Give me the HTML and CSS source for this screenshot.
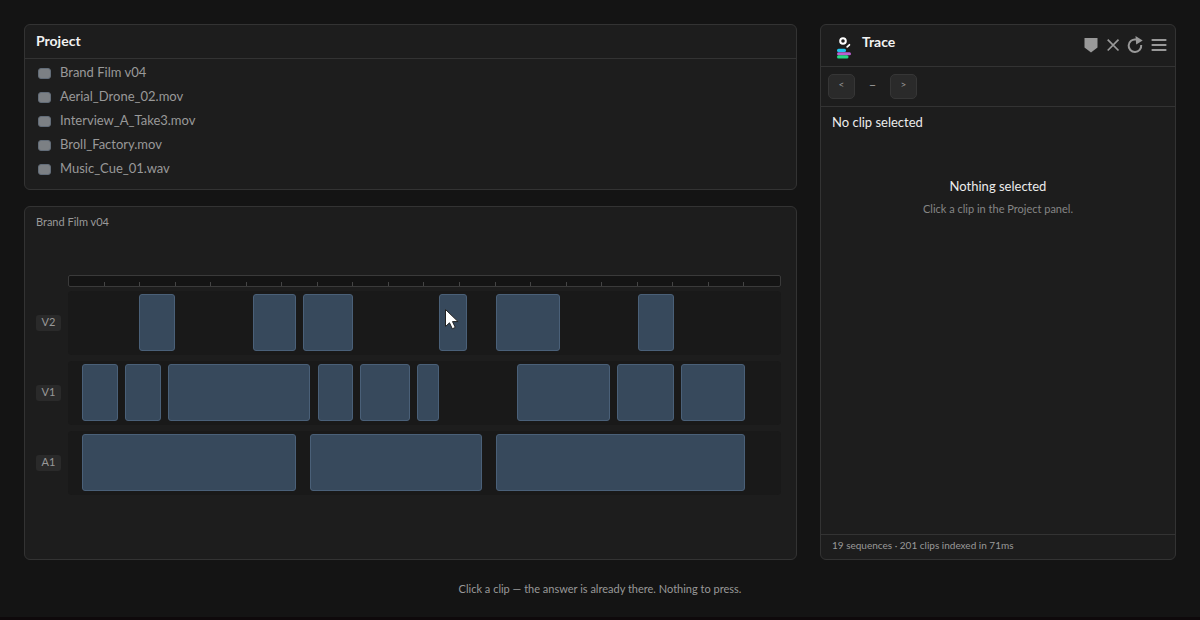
FILE: index.html
```html
<!DOCTYPE html>
<html lang="en">
<head>
    <meta charset="UTF-8">
    <meta name="viewport" content="width=device-width, initial-scale=1.0">
    <title>Trace</title>
    <link rel="stylesheet" href="styles.css">
</head>
<body>
    <main class="workspace">
        <div class="left">
            <section class="panel project">
                <h2 class="panel-title">Project</h2>
                <ul class="files">
                    <li><button class="file"><span class="thumb"></span>Brand Film v04</button></li>
                    <li><button class="file"><span class="thumb"></span>Aerial_Drone_02.mov</button></li>
                    <li><button class="file"><span class="thumb"></span>Interview_A_Take3.mov</button></li>
                    <li><button class="file"><span class="thumb"></span>Broll_Factory.mov</button></li>
                    <li><button class="file"><span class="thumb"></span>Music_Cue_01.wav</button></li>
                </ul>
            </section>

            <section class="panel timeline">
                <h2 class="seq-name">Brand Film v04</h2>
                <div class="tracks">
                    <div class="ruler">
                        <i></i><i></i><i></i><i></i><i></i><i></i><i></i><i></i><i></i><i></i>
                        <i></i><i></i><i></i><i></i><i></i><i></i><i></i><i></i><i></i><i></i>
                    </div>

                    <!-- every lane is 100 columns wide, one per percent of the sequence -->
                    <span class="track-name">V2</span>
                    <div class="lane">
                        <button class="clip" aria-label="V2 clip 1" style="grid-column: 11 / span 5"></button>
                        <button class="clip" aria-label="V2 clip 2" style="grid-column: 27 / span 6"></button>
                        <button class="clip" aria-label="V2 clip 3" style="grid-column: 34 / span 7"></button>
                        <button class="clip" aria-label="V2 clip 4" style="grid-column: 53 / span 4">
                            <svg class="cursor" width="16" height="22" viewBox="0 0 16 22">
                                <path d="M1.5 1.5v17l4-3.7 2.8 6 3-1.4-2.8-5.8h5.6z" fill="#fff" stroke="#222" stroke-width="1"/>
                            </svg>
                        </button>
                        <button class="clip" aria-label="V2 clip 5" style="grid-column: 61 / span 9"></button>
                        <button class="clip" aria-label="V2 clip 6" style="grid-column: 81 / span 5"></button>
                    </div>

                    <span class="track-name">V1</span>
                    <div class="lane">
                        <button class="clip" aria-label="V1 clip 1" style="grid-column: 3 / span 5"></button>
                        <button class="clip" aria-label="V1 clip 2" style="grid-column: 9 / span 5"></button>
                        <button class="clip" aria-label="V1 clip 3" style="grid-column: 15 / span 20"></button>
                        <button class="clip" aria-label="V1 clip 4" style="grid-column: 36 / span 5"></button>
                        <button class="clip" aria-label="V1 clip 5" style="grid-column: 42 / span 7"></button>
                        <button class="clip" aria-label="V1 clip 6" style="grid-column: 50 / span 3"></button>
                        <button class="clip" aria-label="V1 clip 7" style="grid-column: 64 / span 13"></button>
                        <button class="clip" aria-label="V1 clip 8" style="grid-column: 78 / span 8"></button>
                        <button class="clip" aria-label="V1 clip 9" style="grid-column: 87 / span 9"></button>
                    </div>

                    <span class="track-name">A1</span>
                    <div class="lane">
                        <button class="clip" aria-label="A1 clip 1" style="grid-column: 3 / span 30"></button>
                        <button class="clip" aria-label="A1 clip 2" style="grid-column: 35 / span 24"></button>
                        <button class="clip" aria-label="A1 clip 3" style="grid-column: 61 / span 35"></button>
                    </div>
                </div>
            </section>
        </div>

        <aside class="panel trace">
            <header class="trace-head">
                <svg class="logo" width="18" height="24" viewBox="0 0 18 24">
                    <circle cx="8" cy="6" r="2.8" fill="none" stroke="#fff" stroke-width="2"/>
                    <path d="M12.2 11.8l2.2-2" stroke="#fff" stroke-width="1.8" stroke-linecap="round"/>
                    <rect x="2" y="13.8" width="9" height="3.2" rx="1.5" fill="#22c3ee"/>
                    <rect x="2" y="17.2" width="14" height="3" rx="1.5" fill="#b95fd0"/>
                    <rect x="2" y="20.3" width="11.5" height="3.2" rx="1.5" fill="#27d884"/>
                </svg>
                <h2 class="trace-name">Trace</h2>
                <div class="tools">
                    <button class="tool" aria-label="Marker">
                        <svg width="16" height="16" viewBox="0 0 16 16"><path d="M1.5 1h13v9.5L8 15.5 1.5 10.5z" fill="currentColor"/></svg>
                    </button>
                    <button class="tool" aria-label="Clear">
                        <svg width="16" height="16" viewBox="0 0 16 16"><path d="M2.7 2.7l10.8 10.8M13.5 2.7L2.7 13.5" stroke="currentColor" stroke-width="1.7"/></svg>
                    </button>
                    <button class="tool" aria-label="Refresh">
                        <svg width="16" height="18" viewBox="0 0 16 18">
                            <path d="M9 3.5A6.3 6.3 0 1 0 14.2 9" fill="none" stroke="currentColor" stroke-width="2"/>
                            <path d="M8.5 0l7.2 4.6-6.5 4z" fill="currentColor"/>
                        </svg>
                    </button>
                    <button class="tool menu" aria-label="Menu">
                        <svg width="16" height="16" viewBox="0 0 16 16"><path d="M1.4 3h13.2M1.4 8h13.2M1.4 13h13.2" stroke="currentColor" stroke-width="2" stroke-linecap="round"/></svg>
                    </button>
                </div>
            </header>
            <nav class="stepper">
                <button class="step">&lt;</button>
                <span class="count">–</span>
                <button class="step">&gt;</button>
            </nav>
            <p class="selection">No clip selected</p>
            <div class="empty">
                <p class="empty-title">Nothing selected</p>
                <p class="empty-hint">Click a clip in the Project panel.</p>
            </div>
            <footer class="status">19 sequences · 201 clips indexed in 71ms</footer>
        </aside>
    </main>
    <p class="caption">Click a clip — the answer is already there. Nothing to press.</p>
</body>
</html>
```
FILE: styles.css
```css
* {
    box-sizing: border-box;
}

body {
    margin: 0;
    min-height: 100vh;
    display: flex;
    flex-direction: column;
    padding: 24px 24px 0;
    background: #141414;
    border-bottom: 3px solid #0e090b;
    color: #999;
    font-family: Lato, "Liberation Sans", sans-serif;
    font-size: 13px;
}

h2, p, ul {
    margin: 0;
    padding: 0;
    font-weight: normal;
}

button {
    padding: 0;
    border: 0;
    background: none;
    color: inherit;
    font: inherit;
}

.workspace {
    flex: 1;
    display: grid;
    grid-template-columns: minmax(0, 1fr) 356px;
    gap: 23px;
}

.left {
    display: flex;
    flex-direction: column;
    gap: 16px;
}

.panel {
    background: #1d1d1d;
    border: 1px solid #333;
    border-radius: 6px;
}

/* project */
.panel-title {
    padding: 7px 11px 9px;
    border-bottom: 1px solid #333;
    color: #f2f2f2;
    font-size: 14px;
    font-weight: bold;
    line-height: 17px;
}

.files {
    padding: 1px 13px 9px;
    list-style: none;
}

.file {
    display: flex;
    align-items: center;
    gap: 9px;
    width: 100%;
    height: 24px;
    text-align: left;
}

.thumb {
    width: 13px;
    height: 11px;
    margin-top: 2px;
    background: #7c8084;
    border: 1px solid #626c78;
    border-radius: 3px;
}

/* timeline */
.timeline {
    flex: 1;
    display: flex;
    flex-direction: column;
    padding: 7px 15px 20px 11px;
}

.seq-name {
    font-size: 11px;
    line-height: 16px;
}

.tracks {
    margin: auto 0;
    display: grid;
    grid-template-columns: 25px minmax(0, 1fr);
    gap: 6px 7px;
    align-items: center;
}

.ruler {
    grid-column: 2;
    display: grid;
    grid-template-columns: repeat(20, minmax(0, 1fr));
    align-items: end;
    height: 12px;
    margin-bottom: -2px;
    background: #141414;
    border: 1px solid #3a3a3a;
    border-radius: 2px;
}

.ruler i {
    height: 4px;
    border-right: 1px solid #444;
}

.ruler i:last-child {
    border: 0;
}

.track-name {
    height: 16px;
    background: #2a2a2a;
    border-radius: 3px;
    font-size: 11px;
    line-height: 14px;
    text-align: center;
}

.lane {
    display: grid;
    grid-template-columns: repeat(100, minmax(0, 1fr));
    height: 64px;
    padding: 3px 0 4px;
    background: #191919;
    border-radius: 4px;
}

.clip {
    position: relative;
    background: #37495c;
    border: 1px solid #4a6078;
    border-radius: 3px;
}

.cursor {
    position: absolute;
    left: 4px;
    top: 13px;
}

/* trace panel */
.trace {
    display: flex;
    flex-direction: column;
}

.trace-head {
    display: flex;
    align-items: center;
    height: 42px;
    padding: 0 8px 2px 14px;
    border-bottom: 1px solid #333;
}

.logo {
    margin-top: 4px;
}

.trace-name {
    margin: 0 auto 6px 9px;
    color: #f2f2f2;
    font-size: 14px;
    font-weight: bold;
    line-height: 17px;
}

.tools {
    display: flex;
    gap: 6px;
}

.tool {
    display: flex;
    align-items: center;
    justify-content: center;
    width: 16px;
    height: 18px;
}

.menu {
    margin-left: 2px;
}

.stepper {
    display: flex;
    align-items: center;
    height: 40px;
    padding: 0 7px;
    border-bottom: 1px solid #333;
}

.step {
    width: 27px;
    height: 25px;
    padding-bottom: 6px;
    background: #2a2a2a;
    border: 1px solid #363636;
    border-radius: 5px;
    font-size: 10px;
}

.count {
    width: 35px;
    padding-bottom: 4px;
    text-align: center;
}

.selection {
    padding: 6px 11px;
    color: #ececec;
    line-height: 18px;
}

.empty {
    flex: 1;
    padding-top: 40px;
    text-align: center;
}

.empty-title {
    color: #ececec;
    line-height: 18px;
}

.empty-hint {
    margin-top: 6px;
    color: #858585;
    font-size: 11px;
    line-height: 16px;
}

.status {
    height: 25px;
    padding: 0 11px;
    border-top: 1px solid #333;
    font-size: 10px;
    line-height: 20px;
}

.caption {
    padding: 21px 0 20px;
    font-size: 11px;
    line-height: 16px;
    text-align: center;
}
```
